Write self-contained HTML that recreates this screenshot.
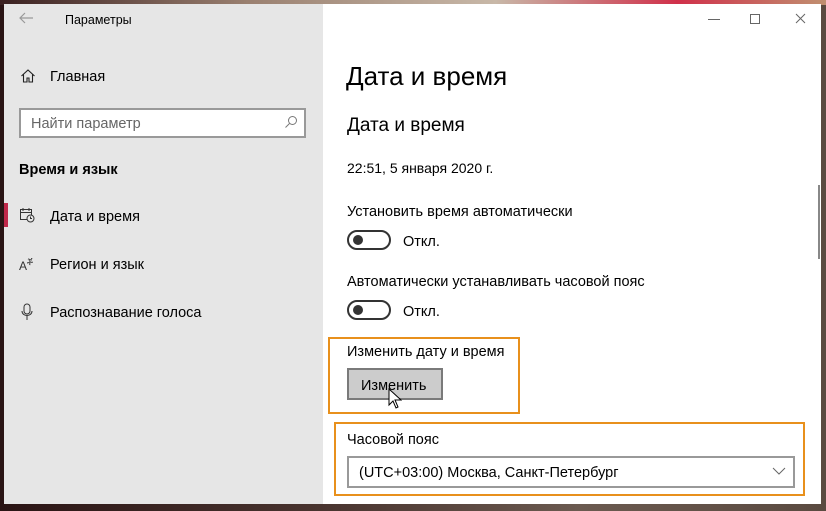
<!DOCTYPE html>
<html><head><meta charset="utf-8"><style>
*{margin:0;padding:0;box-sizing:border-box}
body{width:826px;height:511px;overflow:hidden;position:relative;font-family:"Liberation Sans",sans-serif;color:#000;
background:linear-gradient(90deg,#2a1414 0%,#4a3530 40%,#6b5a50 70%,#5a4a40 100%)}
.a{position:absolute;white-space:nowrap}
.t{font-size:14.5px;color:#000;margin-top:2px}
#top{position:absolute;left:0;top:0;width:826px;height:5px;background:linear-gradient(90deg,#3a2020,#9a8070 30%,#c8b8a8 60%,#d0304a 82%,#c09070 100%)}
#win{position:absolute;left:4px;top:4px;width:817px;height:500px;background:#fff}
#left{position:absolute;left:4px;top:4px;width:319px;height:500px;background:#e6e6e6}
.box{position:absolute;border:2px solid #e8901c}
.tog{position:absolute;width:44px;height:20px;border:2px solid #333;border-radius:10px}
.tog:after{content:"";position:absolute;left:4px;top:3px;width:10px;height:10px;border-radius:5px;background:#333}
</style></head><body>
<div id="top"></div>
<div id="win"></div>
<div id="left"></div>
<svg class="a" style="left:18px;top:11px" width="16" height="14"><path d="M15 7H2M7 2L2 7l5 5" stroke="#999" fill="none" stroke-width="1.2"/></svg>
<div class="a" style="left:65px;top:13px;font-size:12.5px">Параметры</div>
<svg class="a" style="left:700px;top:12px" width="110" height="14"><path d="M8 7.5h12" stroke="#666"/><rect x="50.5" y="2.5" width="9" height="9" fill="none" stroke="#666"/><path d="M96 2l9 9M105 2l-9 9" stroke="#666"/></svg>
<svg class="a" style="left:20px;top:68px" width="16" height="16"><path d="M1.5 8L8 2l6.5 6M3.5 6.5V14h3.5v-4h2v4h3.5V6.5" stroke="#222" fill="none" stroke-width="1.1"/></svg>
<div class="a t" style="left:50px;top:67px">Главная</div>
<div class="a" style="left:19px;top:108px;width:287px;height:30px;border:2px solid #999;background:#fff"></div>
<div class="a" style="left:31px;top:116px;font-size:14.5px;color:#666">Найти параметр</div>
<svg class="a" style="left:284px;top:115px" width="14" height="14"><circle cx="8.5" cy="5.5" r="4" fill="none" stroke="#777"/><path d="M5.5 8.5L1.5 12.5" stroke="#777"/></svg>
<div class="a" style="left:19px;top:162px;font-size:14.5px;font-weight:bold">Время и язык</div>
<div class="a" style="left:4px;top:203px;width:4px;height:24px;background:#c0284a"></div>
<svg class="a" style="left:19px;top:207px" width="16" height="16"><rect x="1.5" y="2.5" width="11" height="10" fill="none" stroke="#333"/><path d="M1.5 5.5h11M4 1v3M10 1v3" stroke="#333"/><circle cx="11.5" cy="11.5" r="3.5" fill="#e6e6e6" stroke="#333"/><path d="M11.5 9.5v2h1.5" stroke="#333" fill="none"/></svg>
<div class="a t" style="left:50px;top:207px">Дата и время</div>
<div class="a" style="left:19px;top:257px;font-size:12px;color:#333">A<sup style="font-size:9px">ቾ</sup></div>
<div class="a t" style="left:50px;top:255px">Регион и язык</div>
<svg class="a" style="left:20px;top:303px" width="14" height="18"><rect x="4" y="1" width="6" height="10" rx="3" fill="none" stroke="#333"/><path d="M2 8c0 6 10 6 10 0M7 13v4" stroke="#333" fill="none"/></svg>
<div class="a t" style="left:50px;top:303px">Распознавание голоса</div>

<div class="a" style="left:346px;top:61px;font-size:26px;font-weight:300">Дата и время</div>
<div class="a" style="left:347px;top:115px;font-size:19px">Дата и время</div>
<div class="a t" style="left:347px;top:158px;font-size:14px">22:51, 5 января 2020 г.</div>
<div class="a t" style="left:347px;top:202px">Установить время автоматически</div>
<div class="tog" style="left:347px;top:230px"></div>
<div class="a t" style="left:403px;top:232px">Откл.</div>
<div class="a t" style="left:347px;top:272px">Автоматически устанавливать часовой пояс</div>
<div class="tog" style="left:347px;top:300px"></div>
<div class="a t" style="left:403px;top:302px">Откл.</div>
<div class="box" style="left:328px;top:337px;width:192px;height:77px"></div>
<div class="a t" style="left:347px;top:342px">Изменить дату и время</div>
<div class="a" style="left:347px;top:368px;width:96px;height:32px;background:#ccc;border:2px solid #7a7a7a"></div>
<div class="a t" style="left:361px;top:376px">Изменить</div>
<svg class="a" style="left:388px;top:388px" width="14" height="22"><path d="M1 1v16l4-4 3 7 2-1-3-7h6z" fill="#fff" stroke="#000"/></svg>
<div class="box" style="left:334px;top:422px;width:471px;height:74px"></div>
<div class="a t" style="left:347px;top:430px">Часовой пояс</div>
<div class="a" style="left:347px;top:456px;width:448px;height:32px;border:2px solid #999;background:#fff"></div>
<div class="a t" style="left:359px;top:463px">(UTC+03:00) Москва, Санкт-Петербург</div>
<svg class="a" style="left:772px;top:466px" width="14" height="10"><path d="M1 2l6 6 6-6" stroke="#666" fill="none"/></svg>
<div class="a" style="left:818px;top:185px;width:2px;height:74px;background:#888"></div>
</body></html>
